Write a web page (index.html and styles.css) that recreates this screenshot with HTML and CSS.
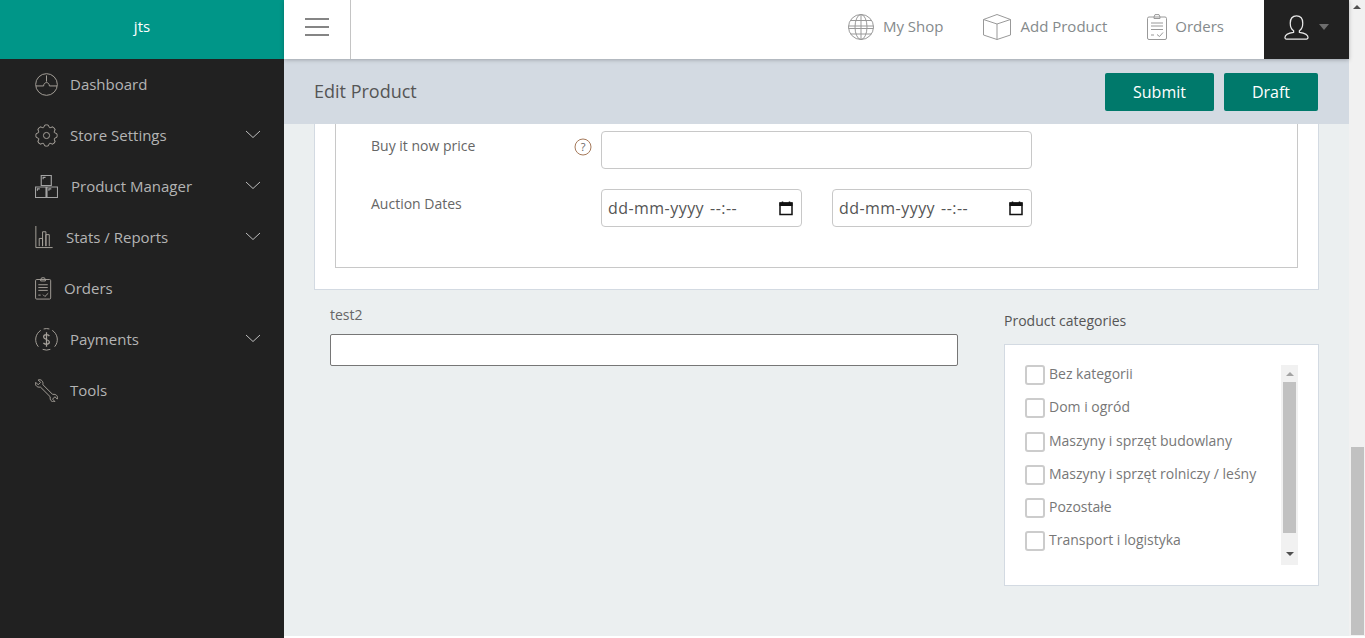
FILE: index.html
```html
<!DOCTYPE html>
<html lang="en">
<head>
<meta charset="utf-8">
<title>Edit Product</title>
<link rel="stylesheet" href="styles.css">
</head>
<body>
<div class="app">
  <aside class="sidebar">
    <div class="brand">jts</div>
    <nav class="side-nav">
      <a class="side-item"><svg class="side-icon" viewBox="0 0 24 24"><circle cx="12" cy="12" r="11.300"/><path d="M1 13.500h8M15 13.500h8M12 2.500v6.500M9 13.500c0-2 1.300-3.500 3-3.500s3 1.500 3 3.500"/></svg><span class="side-label gap-13">Dashboard</span></a>
      <a class="side-item"><svg class="side-icon" viewBox="-12 -12 24 24"><defs><path id="gear-tooth" d="M-3-8.300L-1.900-10.800Q0-11.500 1.900-10.800L3-8.300 3.700-8"/></defs><circle r="3.200"/><use href="#gear-tooth"/><use href="#gear-tooth" transform="rotate(45)"/><use href="#gear-tooth" transform="rotate(90)"/><use href="#gear-tooth" transform="rotate(135)"/><use href="#gear-tooth" transform="rotate(180)"/><use href="#gear-tooth" transform="rotate(225)"/><use href="#gear-tooth" transform="rotate(270)"/><use href="#gear-tooth" transform="rotate(315)"/></svg><span class="side-label gap-13">Store Settings</span><svg class="chev" viewBox="0 0 16 9"><path d="M1 1l7 6.500L15 1"/></svg></a>
      <a class="side-item"><svg class="side-icon boxes" viewBox="0 0 24 24"><path d="M6.500 .5h10.500v10.500h-10.500zM.5 12.500h11v11h-11zM12.500 12.500h11v11h-11zM8.500 4.500v-2h2.500M2.500 16.500v-2h2.500M14.500 16.500v-2h2.500"/></svg><span class="side-label gap-14">Product Manager</span><svg class="chev" viewBox="0 0 16 9"><path d="M1 1l7 6.500L15 1"/></svg></a>
      <a class="side-item"><svg class="side-icon small" viewBox="0 0 18 24"><path d="M.5 0v22.500h17.500M4 21v-8h3.500v8M7.500 21v-15h3.500v15M11 21v-12h3.500v12"/></svg><span class="side-label gap-stats">Stats / Reports</span><svg class="chev" viewBox="0 0 16 9"><path d="M1 1l7 6.500L15 1"/></svg></a>
      <a class="side-item"><svg class="side-icon smaller" viewBox="0 0 18 24"><rect x=".6" y="2.500" width="16" height="20.700" rx="1.200"/><path d="M6 2.500l1-1.800h3l1 1.800v1.500h-5zM3.500 8h10M3.500 11h10M3.500 14h10M3.500 19h2.500M8.500 18.500l2 2 3.500-3.500"/></svg><span class="side-label gap-13">Orders</span></a>
      <a class="side-item"><svg class="side-icon" viewBox="0 0 24 24"><path d="M9 1a11.300 11.300 0 0 1 6 0M18 2.500a11.300 11.300 0 0 1 2.500 17M16 22.300a11.300 11.300 0 0 1-8 0M3.500 19.500a11.300 11.300 0 0 1 2.500-17"/><path class="dollar" d="M15 8.500c-1-2-6-2.200-6 .8 0 3.200 6 2.200 6 5.400 0 3-5 2.800-6.200.8M12 4.500v15"/></svg><span class="side-label gap-13">Payments</span><svg class="chev" viewBox="0 0 16 9"><path d="M1 1l7 6.500L15 1"/></svg></a>
      <a class="side-item"><svg class="side-icon" viewBox="0 0 24 24"><path d="M.8 3.500l2.500 2.500 2.500-2.500-2.500-2.500c2.500-1 5 .8 5 3.500v1.500l10 10h1.500c2.700 0 4.500 2.500 3.500 5l-2.500-2.500-2.500 2.500 2.500 2.500c-2.500 1-5-.8-5-3.500v-1.500l-10-10h-1.500c-2.700 0-4.500-2.500-3.500-5z"/></svg><span class="side-label gap-13">Tools</span></a>
    </nav>
  </aside>

  <div class="main">
    <header class="topbar">
      <button class="burger" type="button" aria-label="Menu"><span></span><span></span><span></span></button>
      <div class="top-links">
        <a class="top-link"><svg class="top-icon globe" viewBox="0 0 26 26"><circle cx="13" cy="13" r="12.500"/><ellipse cx="13" cy="13" rx="6" ry="12.500"/><path d="M13 .5v25M2.500 6.500h21M.5 12h25M.5 14.500h25M2.500 20h21"/></svg><span class="top-text">My Shop</span></a>
        <a class="top-link"><svg class="top-icon box" viewBox="0 0 28 26"><path d="M.5 5.500L14 .5l13.500 5v15.500L14 25.500.5 21zM.5 5.500L14 10l13.500-4.500M14 10v15.500"/></svg><span class="top-text">Add Product</span></a>
        <a class="top-link"><svg class="top-icon clip" viewBox="0 0 20 26"><rect x=".5" y="3" width="19" height="22.500" rx="1.500"/><path d="M7 3l1-2.400h4l1 2.400v1.500h-6zM4 9h12M4 12h12M4 15.500h12M4 21h3M10 20.500l2.500 2 3.500-4"/></svg><span class="top-text">Orders</span></a>
      </div>
      <div class="user-box">
        <svg class="user-icon" viewBox="0 0 26 26"><path d="M13 1c4 0 6.500 3 6.500 7.500 0 3.500-1.500 6.500-3.500 8v1.500c4 .5 9 1.800 9 5.500 0 1-.5 1.500-1.500 1.500h-21c-1 0-1.500-.5-1.500-1.500 0-3.700 5-5 9-5.500v-1.500c-2-1.500-3.500-4.500-3.500-8C6.500 4 9 1 13 1z"/></svg>
        <span class="caret"></span>
      </div>
    </header>

    <div class="subbar">
      <h1 class="page-title">Edit Product</h1>
      <div class="actions">
        <button class="btn btn-submit" type="button">Submit</button>
        <button class="btn btn-draft" type="button">Draft</button>
      </div>
    </div>

    <div class="content">
      <section class="panel">
        <div class="fieldset">
          <div class="row">
            <label class="row-label">Buy it now price</label>
            <svg class="help" viewBox="0 0 18 18"><circle cx="9" cy="9" r="8"/><text x="9" y="13" text-anchor="middle">?</text></svg>
            <input class="field wide" type="text">
          </div>
          <div class="row">
            <label class="row-label">Auction Dates</label>
            <div class="dates">
              <div class="field date"><span class="date-text"><span>dd-mm-yyyy</span><span>--:--</span></span><svg class="cal" viewBox="0 0 16 16"><path d="M2 3h12v11.500H2zM4.500 1.500V3M11.500 1.500V3"/><path class="cal-fill" d="M1.500 2.500h13v3.500h-13z"/></svg></div>
              <div class="field date"><span class="date-text"><span>dd-mm-yyyy</span><span>--:--</span></span><svg class="cal" viewBox="0 0 16 16"><path d="M2 3h12v11.500H2zM4.500 1.500V3M11.500 1.500V3"/><path class="cal-fill" d="M1.500 2.500h13v3.500h-13z"/></svg></div>
            </div>
          </div>
        </div>
      </section>

      <div class="lower">
        <div class="custom-field">
          <label class="custom-label">test2</label>
          <input class="custom-input" type="text">
        </div>
        <div class="categories">
          <h2 class="cat-title">Product categories</h2>
          <div class="cat-box">
            <div class="cat-scroll">
              <ul class="cat-list">
                <li class="cat-item"><span class="check"></span>Bez kategorii</li>
                <li class="cat-item"><span class="check"></span>Dom i ogród</li>
                <li class="cat-item"><span class="check"></span>Maszyny i sprzęt budowlany</li>
                <li class="cat-item"><span class="check"></span>Maszyny i sprzęt rolniczy / leśny</li>
                <li class="cat-item"><span class="check"></span>Pozostałe</li>
                <li class="cat-item"><span class="check"></span>Transport i logistyka</li>
              </ul>
              <div class="mini-scroll">
                <span class="arrow-up faint"></span>
                <span class="mini-thumb"></span>
                <span class="arrow-down"></span>
              </div>
            </div>
          </div>
        </div>
      </div>
    </div>
  </div>

  <div class="page-scroll">
    <span class="arrow-up"></span>
    <span class="page-thumb"></span>
  </div>
</div>
</body>
</html>
```
FILE: styles.css
```css
* { box-sizing: border-box; }
html, body { margin: 0; height: 100%; overflow: hidden; }
body { font-family: "Open Sans", sans-serif; font-size: 14px; color: #777; background: #fff; }
.app { display: flex; width: 1365px; height: 638px; overflow: hidden; background: #fff; }

.sidebar { flex: 0 0 284px; background: #212121; display: flex; flex-direction: column; }
.brand { height: 59px; background: #009688; color: #fff; font-size: 15px; display: flex; align-items: center; justify-content: center; padding-bottom: 7px; }
.side-nav { display: flex; flex-direction: column; }
.side-item { height: 51px; display: flex; align-items: center; padding: 0 23px 0 35px; color: #b4b4b4; font-size: 15px; }
.side-icon { width: 23px; height: 23px; flex: none; fill: none; stroke: #a8a39c; stroke-width: 1; margin-top: -1px; }
.side-icon.boxes { stroke: #a3a3a3; stroke-width: 1.200; }
.side-icon.small { width: 18px; }
.side-icon.smaller { width: 17px; }
.dollar { stroke-width: 1.300; }
.side-label { flex: 1; padding-bottom: 2px; }
.gap-13 { margin-left: 12px; }
.gap-14 { margin-left: 13px; }
.gap-stats { margin-left: 13px; }
.chev { width: 16px; height: 9px; fill: none; stroke: #bdbdbd; stroke-width: 1; flex: none; margin-top: -3px; }

.main { width: 1065px; flex: none; display: flex; flex-direction: column; background: #fff; }
.topbar { height: 59px; flex: none; background: #fff; display: flex; position: relative; z-index: 2; box-shadow: 0 1px 4px rgba(0,0,0,.25); }
.burger { width: 67px; height: 59px; padding: 0 0 5px 21px; background: #fff; border: 0; border-right: 1px solid #c4c4c4; display: flex; flex-direction: column; justify-content: center; gap: 6px; }
.burger span { width: 24px; height: 2px; background: #858585; }
.top-links { flex: 1; display: flex; justify-content: flex-end; align-items: center; gap: 40px; padding: 0 40px 5px 0; }
.top-link { display: flex; align-items: center; font-size: 15px; color: #858a8c; }
.top-text { padding-bottom: 2px; }
.top-icon { width: 26px; height: 26px; margin-right: 9px; fill: none; stroke: #999; stroke-width: 1; }
.top-icon.box { width: 28px; margin-right: 9px; }
.top-icon.clip { width: 20px; margin-right: 8px; }
.user-box { width: 85px; background: #212121; display: flex; align-items: center; padding: 0 0 5px 20px; gap: 10px; }
.user-icon { width: 25px; height: 25px; fill: none; stroke: #e8e8e8; stroke-width: 1.300; }
.caret { width: 0; height: 0; border: 5.500px solid transparent; border-top: 6px solid #6e6e6e; border-bottom: 0; margin-top: 0; }

.subbar { height: 65px; flex: none; background: #d3dae2; display: flex; justify-content: space-between; align-items: center; padding: 0 31px 0 30px; position: relative; z-index: 1; }
.page-title { margin: 0 0 2px; font-size: 18px; font-weight: 400; color: #555; }
.actions { display: flex; gap: 10px; }
.btn { height: 38px; border: 0; border-radius: 2px; background: #00796b; color: #fff; font: 500 16px "Open Sans", sans-serif; }
.btn-submit { width: 109px; }
.btn-draft { width: 94px; }

.content { flex: 1; padding: 0 30px; margin-bottom: 2px; display: flex; flex-direction: column; min-height: 0; background: #ebeff0; }
.panel { width: 1005px; height: 166px; flex: none; background: #fff; border: 1px solid #d3dae2; border-top: 0; padding: 0 20px 21px; }
.fieldset { height: 144px; border: 1px solid #c8c8c8; border-top: 0; padding: 7px 0 0 35px; display: flex; flex-direction: column; gap: 20px; }
.row { display: flex; height: 38px; position: relative; }
.row-label { width: 230px; font-size: 14px; color: #666; padding-top: 5px; }
.help { position: absolute; left: 203px; top: 7px; width: 18px; height: 18px; fill: none; stroke: #a5795a; stroke-width: 1; }
.help text { font: 11px "Open Sans", sans-serif; fill: #666; stroke: none; }
.field { height: 38px; border: 1px solid #c8c8c8; border-radius: 4px; background: #fff; }
.wide { width: 431px; }
.dates { display: flex; gap: 30px; }
.date { width: 201px; display: flex; align-items: center; justify-content: space-between; padding: 0 7px 0 6px; font-size: 16px; color: #555; }
.date:last-child { width: 200px; }
.date-text { display: flex; gap: 6px; letter-spacing: .45px; }
.cal { width: 16px; height: 16px; fill: none; stroke: #111; stroke-width: 1.500; }
.cal-fill { fill: #111; stroke: none; }

.lower { display: flex; }
.custom-field { width: 674px; padding: 15px 0 0 16px; }
.custom-label { display: block; font-size: 14px; color: #666; line-height: 19px; margin-bottom: 10px; }
.custom-input { display: block; width: 628px; height: 32px; border: 1px solid #767676; border-radius: 2px; background: #fff; }
.categories { width: 315px; margin-left: 16px; padding-top: 21px; }
.cat-title { margin: 0 0 14px; font-size: 14px; font-weight: 400; color: #555; line-height: 19px; }
.cat-box { height: 242px; background: #fff; border: 1px solid #d3dae2; padding: 20px; }
.cat-scroll { height: 200px; display: flex; justify-content: space-between; }
.cat-list { list-style: none; margin: 0; padding: 0; }
.cat-item { display: flex; height: 33.250px; font-size: 14px; line-height: 18px; color: #777; }
.check { width: 20px; height: 20px; border: 2px solid #ccc; border-radius: 3px; margin-right: 4px; background: #fff; }
.mini-scroll { width: 17px; background: #f1f1f1; display: flex; flex-direction: column; align-items: center; padding-top: 7px; }
.mini-thumb { width: 13px; height: 151px; background: #c1c1c1; margin-top: 6px; }
.mini-scroll .arrow-down { margin-top: 19px; }
.arrow-up { width: 0; height: 0; border: 4px solid transparent; border-top: 0; border-bottom: 4px solid #505050; }
.arrow-up.faint { border-bottom-color: #a3a3a3; }
.arrow-down { width: 0; height: 0; border: 4px solid transparent; border-bottom: 0; border-top: 4px solid #505050; }

.page-scroll { width: 16px; flex: none; margin-bottom: 2px; background: #f1f1f1; display: flex; flex-direction: column; align-items: center; padding-top: 5px; }
.page-thumb { width: 13px; height: 188px; background: #c1c1c1; margin-top: 438px; }
```
